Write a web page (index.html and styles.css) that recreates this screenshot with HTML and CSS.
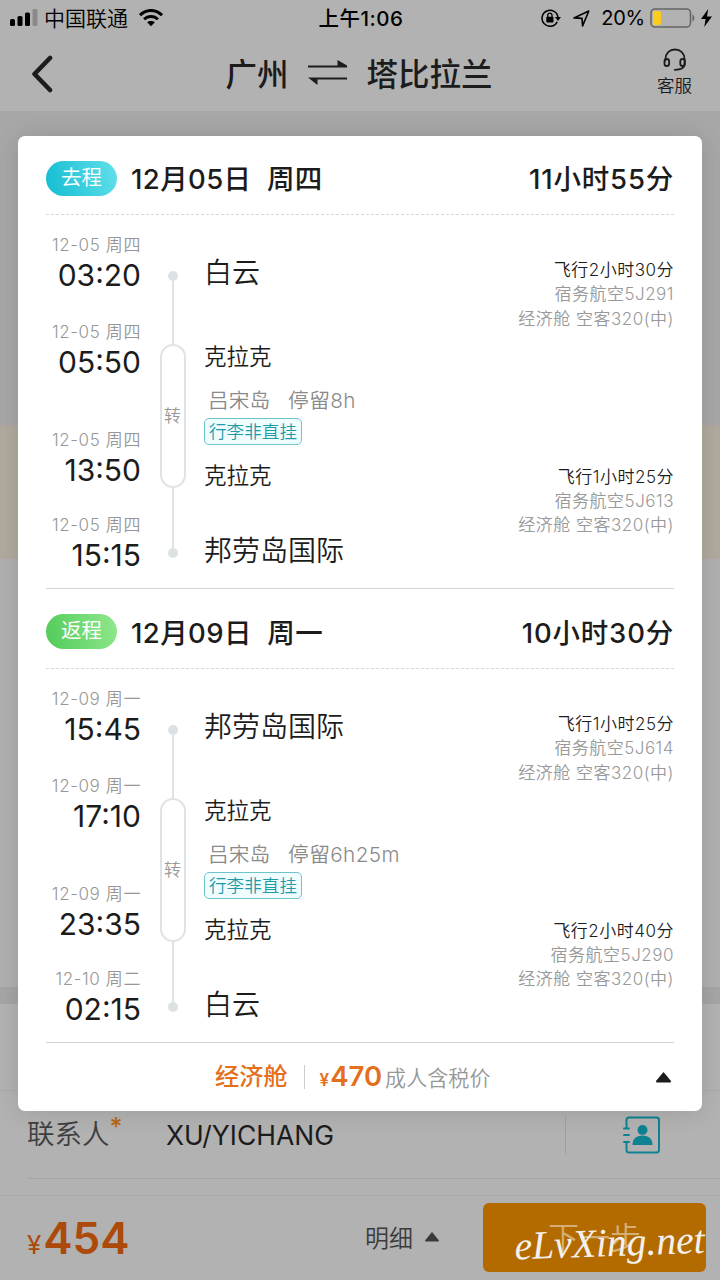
FILE: index.html
```html
<!DOCTYPE html>
<html lang="zh-CN">
<head>
    <meta charset="UTF-8">
    <meta name="viewport" content="width=device-width, initial-scale=1.0">
    <title>广州 - 塔比拉兰</title>
    <link rel="stylesheet" href="styles.css">
</head>
<body>
    <div class="page">
        <div class="status-bar">
            <div class="status-left">
                <svg class="signal" width="28" height="18" viewBox="0 0 28 18">
                    <rect x="0" y="10" width="5" height="7" rx="1.6"/>
                    <rect x="7.5" y="7" width="5" height="10" rx="1.6"/>
                    <rect x="15" y="3.5" width="5" height="13.5" rx="1.6"/>
                    <rect x="22.5" y="0" width="5" height="17" rx="1.6" fill="#8a8a8a"/>
                </svg>
                <span class="carrier">中国联通</span>
                <svg width="24" height="18" viewBox="0 0 24 18" fill="none" stroke="#000" stroke-width="3">
                    <path d="M1 6.2C7.2-.1 16.8-.1 23 6.2"/>
                    <path d="M5.1 10.3c3.9-3.9 9.9-3.9 13.8 0"/>
                    <path d="M12 17.2l-3.9-3.9c2.3-1.9 5.5-1.9 7.8 0z" fill="#000" stroke="none"/>
                </svg>
            </div>
            <div class="status-time">上午1:06</div>
            <div class="status-right">
                <svg width="20" height="18" viewBox="0 0 20 18">
                    <path d="M16.2 12.8A8 8 0 1 1 17 8.6" fill="none" stroke="#000" stroke-width="1.5"/>
                    <path d="M14 8h6l-3 4z"/>
                    <rect x="5.3" y="7.7" width="7.2" height="5.8" rx=".8"/>
                    <path d="M6.8 8V6.2a2.1 2.1 0 0 1 4.2 0V8" fill="none" stroke="#000" stroke-width="1.3"/>
                </svg>
                <svg class="location" width="17" height="17" viewBox="0 0 17 17" fill="none" stroke="#000" stroke-width="1.6" stroke-linejoin="round">
                    <path d="M1 7.9L15.8 1 9.6 15.9 9 8.4z"/>
                </svg>
                <span class="percent">20%</span>
                <svg width="46" height="20" viewBox="0 0 46 20">
                    <rect x="1" y="1" width="39.5" height="18" rx="4" fill="none" stroke="#666" stroke-width="1.6"/>
                    <rect x="3" y="3" width="8" height="14" rx="2" fill="#fdcc1c"/>
                    <path d="M42.5 6.5c2.4 1 2.4 6 0 7z" fill="#666"/>
                </svg>
                <svg class="bolt" width="11" height="18" viewBox="0 0 11 18">
                    <path d="M7.2 0L0 10h4.6L3.2 18 11 7.4H6z"/>
                </svg>
            </div>
        </div>

        <div class="nav">
            <svg class="back" width="22" height="38" viewBox="0 0 22 38" fill="none" stroke="#1c1c1c" stroke-width="4.6" stroke-linecap="round" stroke-linejoin="round">
                <path d="M19 3L3.5 19 19 35"/>
            </svg>
            <div class="route">
                <span>广州</span>
                <svg width="40" height="26" viewBox="0 0 40 26" fill="#1c1c1c">
                    <path d="M0 6.500h29.500V1L39 6.500v2H0z"/>
                    <path d="M39 18.500v2H9.500V26L0 18.500z"/>
                </svg>
                <span>塔比拉兰</span>
            </div>
            <div class="service">
                <svg width="24" height="24" viewBox="0 0 24 24" fill="none" stroke="#1c1c1c" stroke-width="1.8" stroke-linecap="round">
                    <path d="M2.500 12.500V11C2.500 5.500 6.500 1.500 12 1.500s9.500 4 9.500 9.500v5c0 4-2.500 5.800-9.700 5.800"/>
                    <rect x="1.500" y="11" width="4.600" height="7" rx="2.300"/>
                    <rect x="17.300" y="11" width="4.600" height="7" rx="2.300"/>
                </svg>
                <span>客服</span>
            </div>
        </div>

        <div class="backdrop-top"></div>
        <div class="backdrop-notice"></div>
        <div class="backdrop-form"></div>
        <div class="backdrop-gap"></div>
        <div class="backdrop-row"></div>

        <div class="contact">
            <span class="contact-label">联系人<i>*</i></span>
            <span class="contact-name">XU/YICHANG</span>
            <span class="contact-book">
                <svg width="38" height="38" viewBox="0 0 38 38" fill="none" stroke="#0e8291" stroke-width="2" stroke-linecap="round">
                    <path d="M3.500 12V4q0-2.500 2.500-2.500h27.500q2.500 0 2.500 2.500v30q0 2.500-2.500 2.500H6q-2.500 0-2.500-2.500v-8"/>
                    <path d="M1 12.500h5M1 19h5M1 26h5"/>
                    <circle cx="19.500" cy="14" r="5" fill="#0e8291" stroke="none"/>
                    <path d="M9.500 29c0-6 3.500-9.500 10-9.500s10 3.500 10 9.500z" fill="#0e8291" stroke="none"/>
                </svg>
            </span>
        </div>

        <div class="pay-bar">
            <div class="total"><small>¥</small>454</div>
            <div class="detail">
                <span>明细</span>
                <svg width="14" height="10" viewBox="0 0 14 10"><path d="M7 0l7 8.500q0 1-1 1H1q-1 0-1-1z" fill="#3a3a3a"/></svg>
            </div>
            <div class="next">下一步</div>
        </div>

        <div class="card">
            <div class="leg">
                <div class="leg-head">
                    <span class="badge badge-go">去程</span>
                    <span class="leg-date">12月05日&nbsp; 周四</span>
                    <span class="leg-total">11小时55分</span>
                </div>
                <div class="leg-body">
                    <div class="times">
                        <div class="stop"><p>12-05 周四</p><b>03:20</b></div>
                        <div class="stop"><p>12-05 周四</p><b>05:50</b></div>
                        <div class="stop"><p>12-05 周四</p><b>13:50</b></div>
                        <div class="stop"><p>12-05 周四</p><b>15:15</b></div>
                    </div>
                    <div class="track">
                        <i class="dot"></i>
                        <i class="line"></i>
                        <span class="transfer">转</span>
                        <i class="line line-end"></i>
                        <i class="dot"></i>
                    </div>
                    <div class="places">
                        <div class="airport">白云</div>
                        <div class="airport-via">克拉克</div>
                        <div class="stay"><span>吕宋岛</span><span>停留8h</span></div>
                        <div class="tag">行李非直挂</div>
                        <div class="airport-via">克拉克</div>
                        <div class="airport">邦劳岛国际</div>
                    </div>
                    <div class="flights">
                        <div class="flight"><p class="dark">飞行2小时30分</p><p>宿务航空5J291</p><p>经济舱 空客320(中)</p></div>
                        <div class="flight"><p class="dark">飞行1小时25分</p><p>宿务航空5J613</p><p>经济舱 空客320(中)</p></div>
                    </div>
                </div>
            </div>

            <div class="leg leg-return">
                <div class="leg-head">
                    <span class="badge badge-back">返程</span>
                    <span class="leg-date">12月09日&nbsp; 周一</span>
                    <span class="leg-total">10小时30分</span>
                </div>
                <div class="leg-body">
                    <div class="times">
                        <div class="stop"><p>12-09 周一</p><b>15:45</b></div>
                        <div class="stop"><p>12-09 周一</p><b>17:10</b></div>
                        <div class="stop"><p>12-09 周一</p><b>23:35</b></div>
                        <div class="stop"><p>12-10 周二</p><b>02:15</b></div>
                    </div>
                    <div class="track">
                        <i class="dot"></i>
                        <i class="line"></i>
                        <span class="transfer">转</span>
                        <i class="line line-end"></i>
                        <i class="dot"></i>
                    </div>
                    <div class="places">
                        <div class="airport">邦劳岛国际</div>
                        <div class="airport-via">克拉克</div>
                        <div class="stay"><span>吕宋岛</span><span>停留6h25m</span></div>
                        <div class="tag">行李非直挂</div>
                        <div class="airport-via">克拉克</div>
                        <div class="airport">白云</div>
                    </div>
                    <div class="flights">
                        <div class="flight"><p class="dark">飞行1小时25分</p><p>宿务航空5J614</p><p>经济舱 空客320(中)</p></div>
                        <div class="flight"><p class="dark">飞行2小时40分</p><p>宿务航空5J290</p><p>经济舱 空客320(中)</p></div>
                    </div>
                </div>
            </div>

            <div class="fare">
                <span class="cabin">经济舱</span>
                <span class="fare-price"><small>¥</small>470</span>
                <span class="fare-note">成人含税价</span>
                <svg class="collapse" width="15" height="11" viewBox="0 0 15 11"><path d="M7.500 0l7.500 9q0 1.500-1 1.500H1q-1 0-1-1.500z" fill="#1c1c1c"/></svg>
            </div>
        </div>

        <svg class="watermark" width="204" height="60" viewBox="0 0 204 60">
            <text x="3" y="40" textLength="190" lengthAdjust="spacingAndGlyphs" transform="rotate(-2 100 40)">eLvXing.net</text>
        </svg>
    </div>
</body>
</html>
```
FILE: styles.css
```css
body, html {
    margin: 0;
    padding: 0;
}

body {
    font-family: Inter, "Noto Sans CJK SC", sans-serif;
    color: #1c1c1c;
}

p {
    margin: 0;
}

i {
    font-style: normal;
}

.page {
    position: relative;
    display: flex;
    flex-direction: column;
    width: 720px;
    height: 1280px;
    overflow: hidden;
    background: #b2b2b2;
    white-space: nowrap;
}

/* status bar */
.status-bar {
    display: flex;
    align-items: center;
    height: 36px;
    padding: 0 8px 0 10px;
    color: #000;
}

.status-left, .status-right {
    display: flex;
    flex: 1;
    align-items: center;
}

.status-right {
    justify-content: flex-end;
}

.carrier {
    margin: -2px 11px 0 6px;
    font-size: 21px;
    font-weight: 350;
}

.status-time {
    margin-top: -2px;
    font-size: 20.5px;
    font-weight: 500;
    letter-spacing: 0.5px;
}

.location {
    margin: 0 11px 0 12px;
}

.percent {
    margin-right: 5px;
    font-size: 20px;
    letter-spacing: -0.2px;
}

.bolt {
    margin-left: 5px;
}

/* nav */
.nav {
    display: flex;
    align-items: center;
    justify-content: space-between;
    height: 75px;
    padding: 0 28px 0 31px;
}

.route {
    display: flex;
    align-items: center;
    gap: 19px;
    margin-top: -4px;
    padding-left: 8px;
    font-size: 31.5px;
    font-weight: 500;
}

.service {
    display: flex;
    flex-direction: column;
    align-items: center;
    font-size: 17.5px;
    font-weight: 350;
    line-height: 28px;
}

/* order page under the mask */
.backdrop-top {
    height: 314px;
    background: #a7a7a7;
}

.backdrop-notice {
    height: 134px;
    background: #b0a99e;
}

.backdrop-form {
    height: 428px;
    background: #b0b0b0;
}

.backdrop-gap {
    height: 17px;
    background: #a5a5a5;
}

.backdrop-row {
    height: 86px;
    border-bottom: 1px solid #a8a8a8;
}

.contact {
    display: flex;
    align-items: center;
    height: 87px;
    margin-left: 27px;
    border-bottom: 1px solid #a6a6a6;
}

.contact-label {
    width: 139px;
    margin-top: -2px;
    font-size: 27.5px;
    font-weight: 350;
    line-height: 40px;
    color: #3f3f3f;
}

.contact-label i {
    color: #b9680c;
    font-size: 25px;
    font-weight: 500;
    line-height: 20px;
    vertical-align: 8px;
}

.contact-name {
    font-size: 26.5px;
}

.contact-book {
    display: flex;
    align-items: center;
    height: 38px;
    margin-left: auto;
    padding: 0 59px 0 57px;
    border-left: 1px solid #a0a0a0;
}

.pay-bar {
    display: flex;
    align-items: center;
    flex: 1;
    margin-top: 16px;
    padding: 0 14px 0 27px;
    border-top: 1px solid #a9a9a9;
}

.total {
    width: 338px;
    font-size: 44px;
    font-weight: 600;
    color: #ab4a0b;
}

.total small {
    margin-right: 2px;
    font-size: 26px;
    font-weight: 400;
}

.detail {
    display: flex;
    align-items: center;
    gap: 12px;
    margin-top: -3px;
    font-size: 24px;
    font-weight: 350;
    color: #3a3a3a;
}

.next {
    width: 223px;
    height: 69px;
    margin: -2px 0 0 auto;
    border-radius: 6px;
    background: #b36b00;
    color: #d5ae75;
    font-size: 31px;
    font-weight: 350;
    line-height: 69px;
    text-align: center;
}

/* itinerary card */
.card {
    position: absolute;
    top: 136px;
    left: 18px;
    box-sizing: border-box;
    width: 684px;
    height: 975px;
    padding: 0 28px;
    border-radius: 7px;
    background: #fff;
    box-shadow: 0 1px 24px rgba(0, 0, 0, 0.12);
}

.leg-head {
    display: flex;
    align-items: center;
    box-sizing: border-box;
    height: 79px;
    padding-top: 6px;
    border-bottom: 1px dashed #d6d9da;
}

.leg-return .leg-head {
    height: 80px;
}

.badge {
    width: 71px;
    height: 35px;
    margin-right: 14px;
    border-radius: 18px;
    color: #fff;
    font-size: 20.5px;
    line-height: 34px;
    text-align: center;
}

.badge-go {
    background: linear-gradient(75deg, #13bdd2, #62e0ea);
}

.badge-back {
    background: linear-gradient(75deg, #51cb59, #90e88d);
}

.leg-date, .leg-total {
    margin-top: -2px;
    font-size: 27.5px;
    font-weight: 500;
    letter-spacing: 0.4px;
}

.leg-total {
    margin-left: auto;
    letter-spacing: 0.8px;
}

.leg-body {
    display: flex;
    box-sizing: border-box;
    height: 374px;
    border-bottom: 1px solid #d2d4d4;
}

.times {
    width: 95px;
    padding-top: 18px;
    text-align: right;
}

.stop {
    height: 60px;
    margin-bottom: 27px;
}

.stop:nth-child(2) {
    margin-bottom: 48px;
}

.stop:nth-child(3) {
    margin-bottom: 25px;
}

.stop p {
    font-size: 17px;
    font-weight: 350;
    line-height: 24px;
    letter-spacing: 0.6px;
    color: #979797;
}

.stop b {
    display: block;
    font-size: 30px;
    font-weight: 400;
    line-height: 36px;
}

.track {
    display: flex;
    flex-direction: column;
    align-items: center;
    width: 63px;
    padding-top: 56px;
}

.dot {
    width: 10px;
    height: 10px;
    border-radius: 50%;
    background: #dce2e4;
}

.line {
    width: 2px;
    height: 63px;
    background: #dfe3e6;
}

.line-end {
    height: 60px;
}

.transfer {
    box-sizing: border-box;
    width: 26px;
    height: 144px;
    border: 2px solid #dfe3e6;
    border-radius: 13px;
    color: #979797;
    font-size: 17px;
    font-weight: 350;
    line-height: 141px;
    text-align: center;
}

.places {
    display: flex;
    flex-direction: column;
    align-items: flex-start;
    padding-top: 38px;
}

.airport {
    font-size: 28px;
    font-weight: 350;
    line-height: 40px;
}

.airport-via {
    margin: 48px 0 15px;
    font-size: 22.5px;
    font-weight: 350;
    line-height: 32px;
}

.stay {
    display: flex;
    gap: 18px;
    padding-left: 4px;
    font-size: 20.7px;
    font-weight: 350;
    line-height: 26px;
    color: #8a8a8a;
}

.stay span + span {
    letter-spacing: 0.4px;
}

.tag {
    box-sizing: border-box;
    height: 27px;
    margin-top: 4px;
    padding: 0 4px;
    border: 1px solid #6fc3cc;
    border-radius: 5px;
    background: #effdff;
    color: #1f9aa8;
    font-size: 17.6px;
    font-weight: 350;
    line-height: 25px;
}

.tag + .airport-via {
    margin: 15px 0 39px;
}

.flights {
    margin-left: auto;
    padding-top: 43px;
    text-align: right;
}

.flight {
    margin-bottom: 134px;
    font-size: 17px;
    font-weight: 350;
    line-height: 24.3px;
    letter-spacing: 0.5px;
    color: #999;
}

.flight .dark {
    color: #1c1c1c;
}

.fare {
    display: flex;
    align-items: center;
    height: 68px;
    padding-left: 169px;
}

.cabin {
    padding-right: 16px;
    border-right: 1px solid #ccc;
    color: #e46f1c;
    font-size: 24.2px;
    font-weight: 500;
    line-height: 24px;
}

.fare-price {
    margin: -2px 0 0 15px;
    color: #e46f1c;
    font-size: 27.5px;
    font-weight: 600;
}

.fare-price small {
    margin-right: 1px;
    font-size: 17px;
}

.fare-note {
    margin: -1px 0 0 3px;
    color: #979797;
    font-size: 21.1px;
    font-weight: 350;
}

.collapse {
    margin: 1px 3px 0 auto;
}

.watermark {
    position: absolute;
    left: 512px;
    top: 1216px;
}

.watermark text {
    fill: #f4f1ec;
    font-family: "Brush Script MT", "Liberation Serif", cursive;
    font-size: 40px;
    font-style: italic;
}
```
